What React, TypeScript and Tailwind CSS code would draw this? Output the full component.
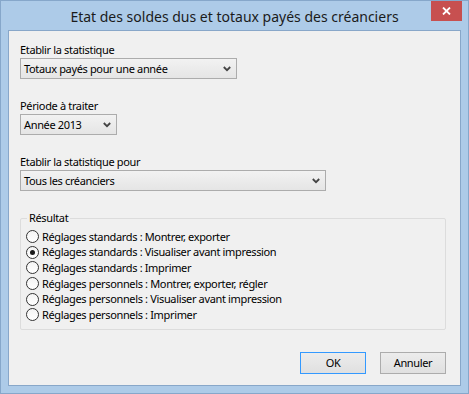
import React from "react";

const options = [
  { label: "Réglages standards : Montrer, exporter", checked: false },
  { label: "Réglages standards : Visualiser avant impression", checked: true },
  { label: "Réglages standards : Imprimer", checked: false },
  { label: "Réglages personnels : Montrer, exporter, régler", checked: false },
  { label: "Réglages personnels : Visualiser avant impression", checked: false },
  { label: "Réglages personnels : Imprimer", checked: false },
];

function Combo({ text, width }: { text: string; width: string }) {
  return (
    <div
      className={`${width} h-[21px] flex items-center justify-between border border-[#acacac] bg-gradient-to-b from-[#f2f2f2] to-[#e5e5e5] pl-[3px] pr-[5px]`}
    >
      <span className="leading-[16px]">{text}</span>
      <svg width="8" height="6" viewBox="0 0 8 6" className="mt-[1px]">
        <polyline points="0.8,1 4,4.2 7.2,1" fill="none" stroke="#444" strokeWidth="1.8" />
      </svg>
    </div>
  );
}

function Radio({ label, checked }: { label: string; checked: boolean }) {
  return (
    <div className="h-[15.6px] flex items-center">
      <div className="w-[13px] h-[13px] rounded-full border border-[#333] bg-gradient-to-b from-[#f4f4f4] to-[#ffffff] flex items-center justify-center">
        {checked && <div className="w-[5px] h-[5px] rounded-full bg-[#1a1a1a]" />}
      </div>
      <span className="ml-[3px] leading-[16px]">{label}</span>
    </div>
  );
}

export default function App() {
  return (
    <div className="w-[469px] h-[394px] bg-[#adcbe8] border border-[#86a7ca] font-['Segoe_UI','Noto_Sans',sans-serif] text-black">
      {/* barre de titre */}
      <div className="relative h-[29px] flex items-center justify-center">
        <span className="text-[14px] text-[#1b1b1b] mt-[2px]">
          Etat des soldes dus et totaux payés des créanciers
        </span>
        <div className="absolute top-0 right-[6px] w-[31px] h-[20px] bg-[#c75050] flex items-center justify-center">
          <svg width="9" height="8" viewBox="0 0 9 8">
            <path d="M1 0.5 L8 7.5 M8 0.5 L1 7.5" stroke="#fff" strokeWidth="1.8" />
          </svg>
        </div>
      </div>

      <div className="mx-[7px] h-[356px] border border-[#88a7c9] bg-[#f0f0f0] text-[11px] tracking-[-0.35px] pl-[11px] pr-[14px] pt-[11px]">
        <div className="leading-[16px]">Etablir la statistique</div>
        <Combo text="Totaux payés pour une année" width="w-[217px]" />

        <div className="leading-[16px] mt-[19px]">Période à traiter</div>
        <Combo text="Année 2013" width="w-[97px]" />

        <div className="leading-[16px] mt-[19px]">Etablir la statistique pour</div>
        <Combo text="Tous les créanciers" width="w-[306px]" />

        <fieldset className="mt-[19px] border border-[#dcdcdc] pl-[5px] pb-[6px] rounded-[2px]">
          <legend className="ml-[1px] px-[2px] leading-[16px]">Résultat</legend>
          <div className="pt-[3px]">
            {options.map((o) => (
              <Radio key={o.label} label={o.label} checked={o.checked} />
            ))}
          </div>
        </fieldset>

        <div className="mt-[22px] flex justify-end gap-[14px]">
          <button className="w-[66px] h-[22px] border border-[#3399ff] bg-gradient-to-b from-[#ececec] to-[#e0e0e0] leading-[16px]">
            OK
          </button>
          <button className="w-[66px] h-[22px] border border-[#acacac] bg-gradient-to-b from-[#ececec] to-[#e0e0e0] leading-[16px]">
            Annuler
          </button>
        </div>
      </div>
    </div>
  );
}
